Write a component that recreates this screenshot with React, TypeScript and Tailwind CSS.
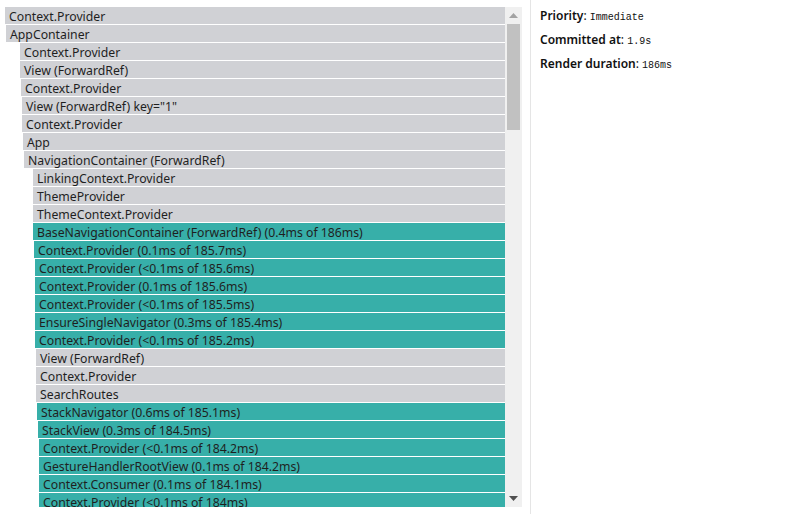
import React from "react"

type Row = { name: string; left: number; rendered?: boolean }

const rows: Row[] = [
  { name: "Context.Provider", left: 5 },
  { name: "AppContainer", left: 6 },
  { name: "Context.Provider", left: 20 },
  { name: "View (ForwardRef)", left: 20 },
  { name: "Context.Provider", left: 21 },
  { name: 'View (ForwardRef) key="1"', left: 22 },
  { name: "Context.Provider", left: 22 },
  { name: "App", left: 23 },
  { name: "NavigationContainer (ForwardRef)", left: 24 },
  { name: "LinkingContext.Provider", left: 33 },
  { name: "ThemeProvider", left: 33 },
  { name: "ThemeContext.Provider", left: 33 },
  { name: "BaseNavigationContainer (ForwardRef) (0.4ms of 186ms)", left: 33, rendered: true },
  { name: "Context.Provider (0.1ms of 185.7ms)", left: 34, rendered: true },
  { name: "Context.Provider (<0.1ms of 185.6ms)", left: 35, rendered: true },
  { name: "Context.Provider (0.1ms of 185.6ms)", left: 35, rendered: true },
  { name: "Context.Provider (<0.1ms of 185.5ms)", left: 35, rendered: true },
  { name: "EnsureSingleNavigator (0.3ms of 185.4ms)", left: 35, rendered: true },
  { name: "Context.Provider (<0.1ms of 185.2ms)", left: 35, rendered: true },
  { name: "View (ForwardRef)", left: 36 },
  { name: "Context.Provider", left: 36 },
  { name: "SearchRoutes", left: 36 },
  { name: "StackNavigator (0.6ms of 185.1ms)", left: 37, rendered: true },
  { name: "StackView (0.3ms of 184.5ms)", left: 38, rendered: true },
  { name: "Context.Provider (<0.1ms of 184.2ms)", left: 39, rendered: true },
  { name: "GestureHandlerRootView (0.1ms of 184.2ms)", left: 39, rendered: true },
  { name: "Context.Consumer (0.1ms of 184.1ms)", left: 39, rendered: true },
  { name: "Context.Provider (<0.1ms of 184ms)", left: 39, rendered: true },
]

function Scrollbar() {
  return (
    <div className="w-[17px] shrink-0 bg-[#f0f0f0] flex flex-col items-center">
      <div className="h-[17px] w-full flex items-center justify-center">
        <svg width="9" height="5" viewBox="0 0 9 5">
          <path d="M0 5 L4.5 0 L9 5 Z" fill="#a3a3a3" />
        </svg>
      </div>
      <div className="w-[13px] h-[106px] bg-[#c1c1c1]" />
      <div className="flex-1" />
      <div className="h-[17px] w-full flex items-center justify-center">
        <svg width="9" height="5" viewBox="0 0 9 5">
          <path d="M0 0 L9 0 L4.5 5 Z" fill="#505050" />
        </svg>
      </div>
    </div>
  )
}

const mono = { fontFamily: '"Liberation Mono", monospace' }

export default function App() {
  return (
    <div
      className="w-[795px] h-[514px] bg-white flex overflow-hidden"
      style={{ fontFamily: '"Segoe UI", "Noto Sans", sans-serif' }}
    >
      {/* flame chart */}
      <div className="pt-[7px]">
        <div className="flex h-[500px]">
          <div className="w-[505px] overflow-hidden">
            {rows.map((row, i) => (
              <div
                key={i}
                className={`h-[17px] mb-px pl-[4px] text-[12.25px] leading-[19px] overflow-hidden text-[#1f1f1f] whitespace-nowrap ${
                  row.rendered ? "bg-[#37afa9]" : "bg-[#d0d1d5]"
                }`}
                style={{ marginLeft: row.left }}
              >
                {row.name}
              </div>
            ))}
          </div>
          <Scrollbar />
        </div>
      </div>

      {/* commit info */}
      <div className="ml-[8px] border-l border-[#e5e5e5] pl-[9px] pt-[4px] flex flex-col text-[12px] text-[#111]">
        <div className="h-[24px] leading-[24px]">
          <span className="font-semibold">Priority</span>:{" "}
          <span className="text-[10px]" style={mono}>Immediate</span>
        </div>
        <div className="h-[24px] leading-[24px]">
          <span className="font-semibold">Committed at</span>:{" "}
          <span className="text-[10px]" style={mono}>1.9s</span>
        </div>
        <div className="h-[24px] leading-[24px]">
          <span className="font-semibold">Render duration</span>:{" "}
          <span className="text-[10px]" style={mono}>186ms</span>
        </div>
      </div>
    </div>
  )
}
